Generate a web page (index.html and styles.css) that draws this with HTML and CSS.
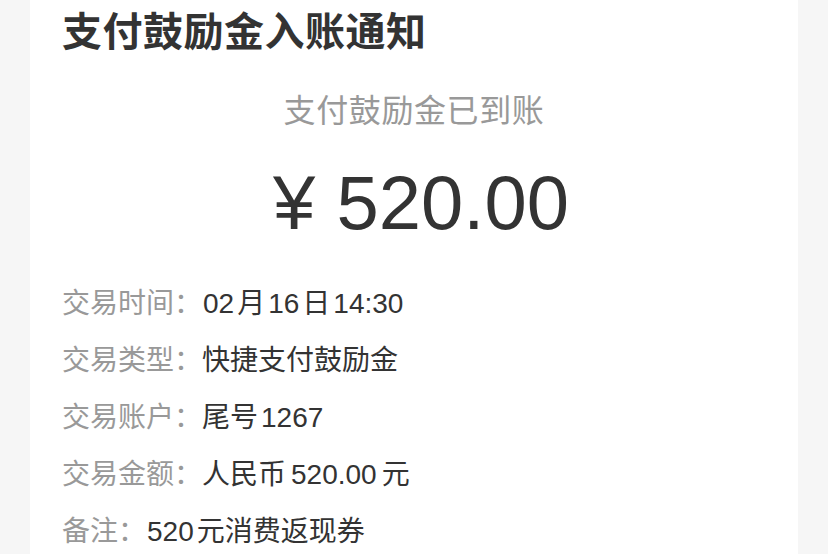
FILE: index.html
```html
<!DOCTYPE html>
<html lang="zh-CN">
<head>
  <meta charset="UTF-8">
  <meta name="viewport" content="width=device-width, initial-scale=1.0">
  <title>支付鼓励金入账通知</title>
  <link rel="stylesheet" href="styles.css">
</head>
<body>
  <!-- 通知卡片 -->
  <div class="tarjeta">
    <h1 class="titulo">支付鼓励金入账通知</h1>
    <p class="subtitulo">支付鼓励金已到账</p>
    <p class="monto">¥ 520.00</p>

    <!-- 交易明细 -->
    <div class="detalle">
      <div class="fila"><span class="etiqueta">交易时间：</span><span class="valor"><span class="num inicio">02</span>月<span class="num">16</span>日<span class="num fin">14:30</span></span></div>
      <div class="fila"><span class="etiqueta">交易类型：</span><span class="valor">快捷支付鼓励金</span></div>
      <div class="fila"><span class="etiqueta">交易账户：</span><span class="valor">尾号<span class="num fin">1267</span></span></div>
      <div class="fila"><span class="etiqueta">交易金额：</span><span class="valor">人民币<span class="num ancho">520.00</span>元</span></div>
      <div class="fila"><span class="etiqueta">备注：</span><span class="valor"><span class="num inicio">520</span>元消费返现券</span></div>
    </div>
  </div>
</body>
</html>
```

FILE: styles.css
```css
body {
  font-family: "Liberation Sans", "Noto Sans CJK SC", sans-serif;
  margin: 0;
  padding: 0;
  background-color: #f6f6f6;
  color: #333;
  height: 554px;
  overflow: hidden;
}

.tarjeta {
  margin: 0 30px;
  padding: 0 32px;
  background-color: #fff;
  height: 100%;
}

.titulo {
  margin: 0;
  font-size: 40px;
  line-height: 64px;
  font-weight: bold;
  letter-spacing: 0.5px;
  color: #333;
}

.subtitulo {
  margin: 23px 0 0;
  font-size: 32px;
  line-height: 48px;
  letter-spacing: 0.6px;
  text-align: center;
  color: #999;
}

.monto {
  margin: 18px 0 0;
  padding-left: 14px;
  font-size: 76px;
  line-height: 100px;
  text-align: center;
  color: #333;
}

.detalle {
  margin-top: 22px;
}

.fila {
  font-size: 28px;
  line-height: 57px;
}

.etiqueta {
  color: #999;
}

.valor {
  color: #333;
}

/* espacio entre cifras y caracteres chinos */
.num {
  margin: 0 3px;
}

.num.ancho {
  margin: 0 5px;
}

.num.inicio {
  margin-left: 1px;
}

.num.fin {
  margin-right: 0;
}
```
